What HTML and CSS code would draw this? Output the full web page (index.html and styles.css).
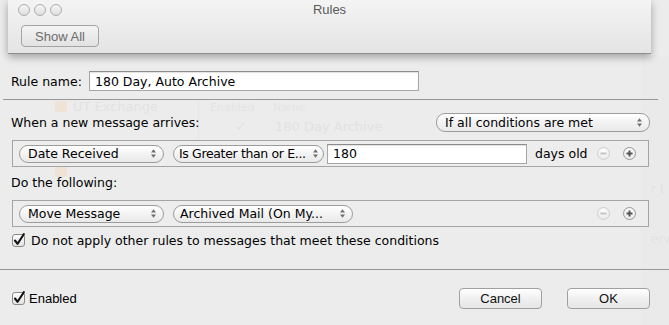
FILE: index.html
```html
<!DOCTYPE html>
<html>
<head>
<meta charset="utf-8">
<title>Rules</title>
<link rel="stylesheet" href="styles.css">
</head>
<body>
<div class="backdrop">
  <span class="bg-icon bg-icon-1"></span><span class="bg-text bg-ut">UT Exchange</span>
  <span class="bg-icon bg-icon-2"></span>
  <span class="bg-col bg-enabled">Enabled</span><span class="bg-col bg-name">Name</span>
  <span class="bg-check">✓</span><span class="bg-text bg-rule">180 Day Archive</span>
  <div class="bg-vline"></div>
  <div class="bg-band"><span class="bg-band-t1">r (</span><span class="bg-band-t2">erv</span></div>
</div>

<div class="toolbar">
  <div class="titlebar">
    <div class="lights"><span class="light"></span><span class="light"></span><span class="light"></span></div>
  </div>
  <div class="title">Rules</div>
  <button class="tb-btn">Show All</button>
</div>

<div class="sheet">
  <div class="name-row">
    <span class="label">Rule name:</span>
    <div class="field name-field">180 Day, Auto Archive</div>
  </div>
  <div class="sep"></div>

  <div class="when-row">
    <span>When a new message arrives:</span>
    <div class="popup popup-all"><span class="ptext">If all conditions are met</span><svg class="chev" width="7" height="11" viewBox="0 0 7 11"><path d="M1 4.5L3.5 1.2L6 4.5Z M1 6.5L3.5 9.8L6 6.5Z"/></svg></div>
  </div>

  <div class="box cond-box">
    <div class="popup popup-a"><span class="ptext">Date Received</span><svg class="chev" width="7" height="11" viewBox="0 0 7 11"><path d="M1 4.5L3.5 1.2L6 4.5Z M1 6.5L3.5 9.8L6 6.5Z"/></svg></div>
    <div class="popup popup-b"><span class="ptext">Is Greater than or E...</span><svg class="chev" width="7" height="11" viewBox="0 0 7 11"><path d="M1 4.5L3.5 1.2L6 4.5Z M1 6.5L3.5 9.8L6 6.5Z"/></svg></div>
    <div class="field days-field">180</div>
    <span class="days">days old</span>
    <span class="spacer"></span>
    <span class="circ minus"><svg width="13" height="13" viewBox="0 0 13 13"><path d="M3.5 6.5H9.5" stroke="#c4c4c4" stroke-width="2"/></svg></span>
    <span class="circ plus"><svg width="13" height="13" viewBox="0 0 13 13"><path d="M3.5 6.5H9.5M6.5 3.5V9.5" stroke="#555" stroke-width="2"/></svg></span>
  </div>

  <div class="do-label">Do the following:</div>

  <div class="box act-box">
    <div class="popup popup-a"><span class="ptext">Move Message</span><svg class="chev" width="7" height="11" viewBox="0 0 7 11"><path d="M1 4.5L3.5 1.2L6 4.5Z M1 6.5L3.5 9.8L6 6.5Z"/></svg></div>
    <div class="popup popup-c"><span class="ptext">Archived Mail (On My...</span><svg class="chev" width="7" height="11" viewBox="0 0 7 11"><path d="M1 4.5L3.5 1.2L6 4.5Z M1 6.5L3.5 9.8L6 6.5Z"/></svg></div>
    <span class="spacer"></span>
    <span class="circ minus"><svg width="13" height="13" viewBox="0 0 13 13"><path d="M3.5 6.5H9.5" stroke="#c4c4c4" stroke-width="2"/></svg></span>
    <span class="circ plus"><svg width="13" height="13" viewBox="0 0 13 13"><path d="M3.5 6.5H9.5M6.5 3.5V9.5" stroke="#555" stroke-width="2"/></svg></span>
  </div>

  <div class="check-row">
    <svg class="cbox" width="14" height="15" viewBox="0 0 14 15"><defs><linearGradient id="cbg" x1="0" y1="0" x2="0" y2="1"><stop offset="0" stop-color="#ffffff"/><stop offset="1" stop-color="#e2e2e2"/></linearGradient></defs><rect x="0.5" y="1.5" width="12" height="12" rx="2.5" fill="url(#cbg)" stroke="#8a8a8a"/><path d="M3 7.5L5.6 10.8L11.8 1.2" fill="none" stroke="#111" stroke-width="2.1" stroke-linejoin="round" stroke-linecap="round"/></svg>
    <span>Do not apply other rules to messages that meet these conditions</span>
  </div>

  <div class="sep sep-bottom"></div>

  <div class="footer">
    <div class="enabled">
      <svg class="cbox" width="14" height="15" viewBox="0 0 14 15"><rect x="0.5" y="1.5" width="12" height="12" rx="2.5" fill="url(#cbg)" stroke="#8a8a8a"/><path d="M3 7.5L5.6 10.8L11.8 1.2" fill="none" stroke="#111" stroke-width="2.1" stroke-linejoin="round" stroke-linecap="round"/></svg>
      <span>Enabled</span>
    </div>
    <div class="buttons">
      <button class="btn">Cancel</button>
      <button class="btn">OK</button>
    </div>
  </div>
</div>
</body>
</html>
```
FILE: styles.css
```css
* { box-sizing: border-box; }
html, body { margin: 0; padding: 0; }
body {
  width: 669px;
  height: 325px;
  overflow: hidden;
  position: relative;
  background: #ececec;
  font-family: "DejaVu Sans", sans-serif;
  font-size: 12.5px;
  color: #000;
}

/* faint window behind the sheet */
.backdrop { position: absolute; left: 0; top: 0; width: 669px; height: 325px; }
.bg-text, .bg-col, .bg-check, .bg-band span { position: absolute; color: #e2e2e2; white-space: nowrap; }
.bg-text { font-size: 13px; }
.bg-ut { left: 73px; top: 99px; }
.bg-rule { left: 275px; top: 119px; }
.bg-col { font-size: 11px; top: 101px; color: #e4e4e4; }
.bg-enabled { left: 210px; }
.bg-name { left: 273px; }
.bg-check { left: 235px; top: 118px; font-size: 14px; }
.bg-icon { position: absolute; width: 12px; height: 11px; border-radius: 2px; background: #efe3d6; }
.bg-icon-1 { left: 55px; top: 101px; }
.bg-icon-2 { left: 55px; top: 166px; }
.bg-vline { position: absolute; left: 198px; top: 100px; width: 1px; height: 40px; background: #e6e6e6; }
.bg-band { position: absolute; left: 641px; top: 56px; width: 28px; height: 269px; background: #eaeaea; }
.bg-band-t1 { left: 10px; top: 126px; font-size: 12px; }
.bg-band-t2 { left: 10px; top: 176px; font-size: 12px; }

/* toolbar window */
.toolbar {
  position: relative;
  z-index: 2;
  margin-left: 8px;
  width: 643px;
  height: 54px;
  padding: 4px 0 0 10px;
  background: linear-gradient(#f4f4f4, #e4e4e4);
  border-bottom: 1px solid #8e8e8e;
  box-shadow: 0 3px 8px rgba(0, 0, 0, 0.33);
}
.titlebar { height: 12px; display: flex; align-items: center; }
.lights { display: flex; gap: 4px; }
.light {
  width: 12px; height: 12px; border-radius: 50%;
  border: 1px solid #acacac;
  background: linear-gradient(#f6f6f6, #dedede);
}
.title {
  position: absolute; left: 0; right: 0; top: 2px;
  text-align: center;
  font-family: "Liberation Sans", sans-serif;
  font-size: 13px;
  color: #5a5a5a;
}
.tb-btn {
  display: block;
  margin: 9px 0 0 3px;
  width: 78px; height: 22px;
  padding: 0;
  border: 1px solid #a4a4a4;
  border-radius: 4px;
  background: linear-gradient(#f4f4f4, #e2e2e2);
  font-family: "Liberation Sans", sans-serif;
  font-size: 13px;
  color: #6c6c6c;
}

/* sheet */
.sheet { position: relative; z-index: 1; padding: 17px 19px 0 11px; }
.name-row { display: flex; align-items: center; height: 20px; }
.label { width: 78px; }
.field {
  height: 20px;
  display: flex; align-items: center;
  padding: 0 5px;
  background: #fff;
  border: 1px solid #a6a6a6;
  border-top-color: #8c8c8c;
  box-shadow: inset 0 1px 1px rgba(0, 0, 0, 0.12);
}
.name-field { width: 330px; }
.sep { margin: 8px 0 0 -8px; width: 655px; height: 1px; background: #979797; }

.when-row { margin-top: 13px; height: 19px; display: flex; align-items: center; justify-content: space-between; }
.popup {
  display: flex; align-items: center;
  height: 18px;
  padding: 0 6px 0 8px;
  border: 1px solid #9c9c9c;
  border-radius: 9px;
  background: linear-gradient(#ffffff, #f3f3f3 50%, #e9e9e9);
  white-space: nowrap;
}
.ptext { flex: 1; }
.popup-all { width: 214px; height: 19px; }
.chev { fill: #6e6e6e; flex: none; margin-left: 2px; }

.box {
  margin: 8px 0 0 1px;
  width: 637px; height: 27px;
  display: flex; align-items: center;
  padding: 0 12px 0 6px;
  border: 1px solid #a5a5a5;
  background: #ededed;
}
.popup-a { width: 145px; }
.popup-b { width: 151px; margin-left: 9px; padding: 0 4px 0 5px; }
.popup-b .ptext { letter-spacing: -0.35px; }
.popup-b .chev { margin-left: 0; }
.popup-c { width: 180px; margin-left: 9px; padding-left: 6px; }
.days-field { width: 200px; margin-left: 3px; }
.days { margin-left: 8px; }
.spacer { flex: 1; }
.circ {
  width: 13px; height: 13px; border-radius: 50%;
  display: flex;
  border: 1px solid #bdbdbd;
  background: radial-gradient(circle at 50% 30%, #ffffff, #e4e4e4);
}
.circ svg { margin: -1px; }
.plus { margin-left: 13px; border-color: #999; }
.minus { border-color: #cfcfcf; }

.do-label { margin-top: 8px; height: 15px; line-height: 15px; }
.act-box { margin-top: 10px; }

.check-row { margin-top: 6px; display: flex; align-items: center; height: 15px; }
.cbox { flex: none; margin-left: 1px; }
.check-row span { margin-left: 5px; }

.sep-bottom { margin: 21px 0 0 -11px; width: 669px; }

.footer { margin-top: 17px; display: flex; align-items: center; justify-content: space-between; height: 22px; }
.enabled { display: flex; align-items: center; font-family: "Liberation Sans", sans-serif; font-size: 13px; }
.enabled span { margin-left: 3px; }
.buttons { display: flex; gap: 25px; }
.btn {
  width: 83px; height: 21px; padding: 0;
  border: 1px solid #a0a0a0;
  border-radius: 4px;
  background: linear-gradient(#ffffff, #f0f0f0 50%, #e6e6e6);
  font-family: "Liberation Sans", sans-serif;
  font-size: 13px;
  color: #111;
}
```
